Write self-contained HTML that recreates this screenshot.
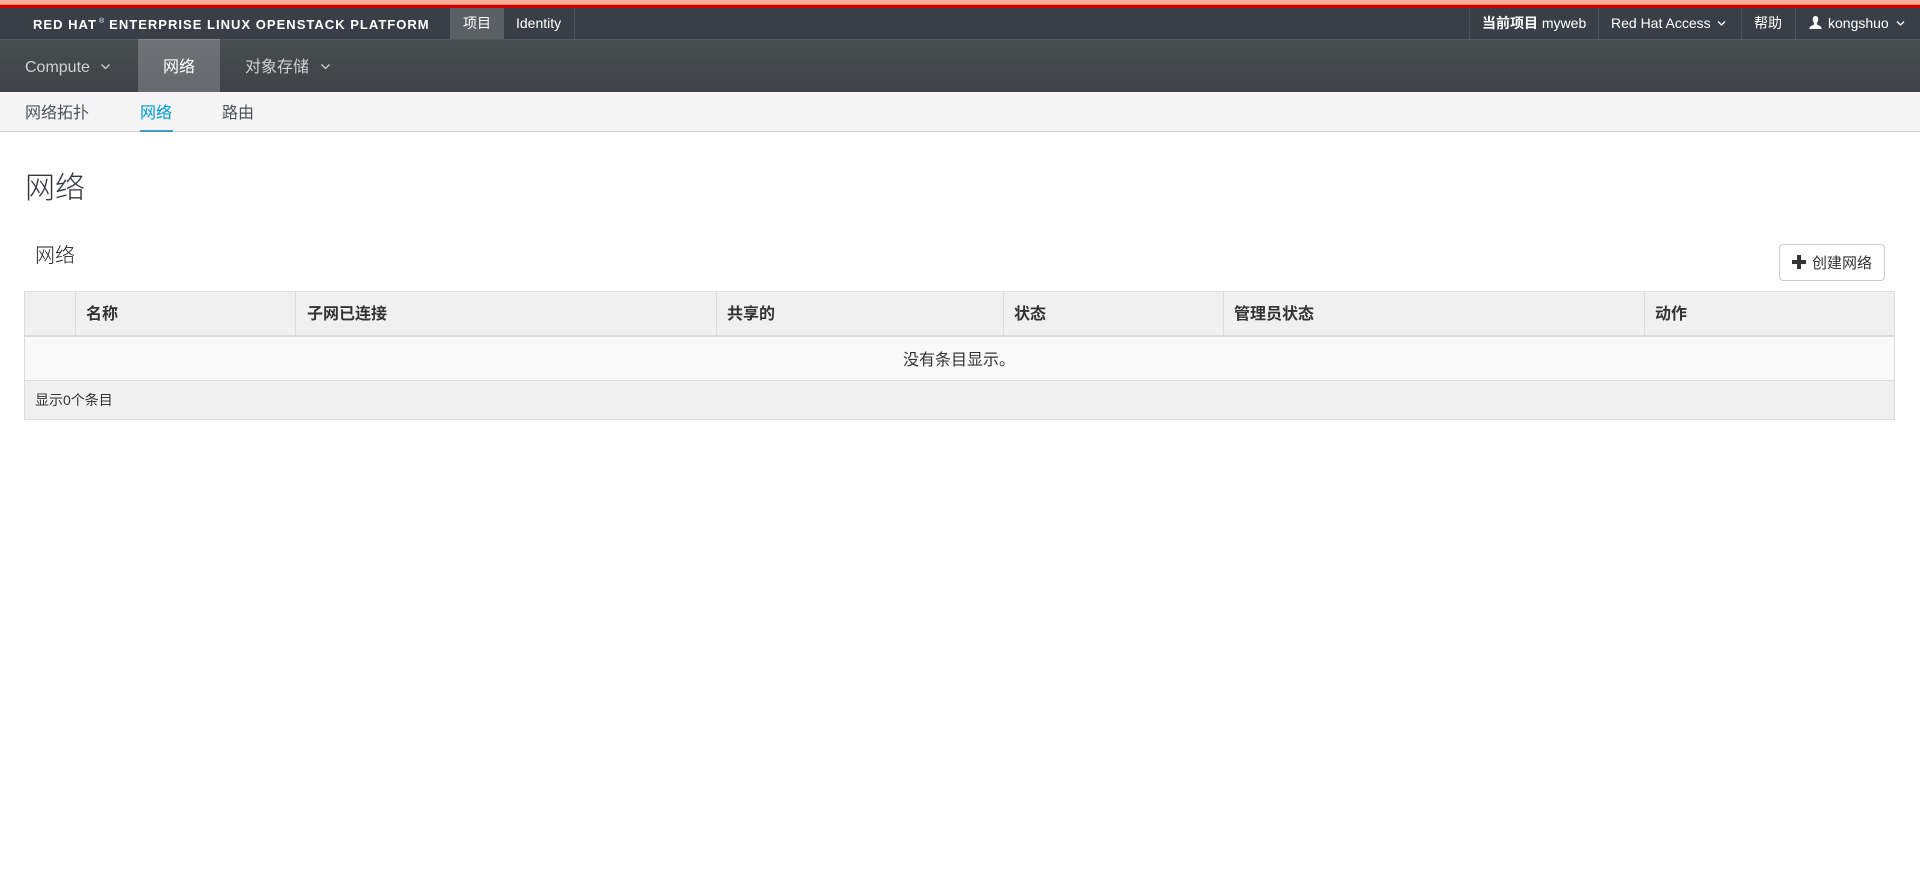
<!DOCTYPE html>
<html lang="zh">
<head>
<meta charset="utf-8">
<title>网络</title>
<style>
html,body{margin:0;padding:0;width:1920px;height:888px;overflow:hidden;background:#fff;}
body{font-family:"Liberation Sans","WenQuanYi Zen Hei","Noto Sans CJK SC",sans-serif;color:#333;font-size:14px;position:relative;}
.a{position:absolute;white-space:nowrap;}
.sep{position:absolute;top:8px;height:31px;width:1px;background:#4e5359;}
.tx{line-height:31px;top:8px;color:#fff;font-size:14px;}
.th{position:absolute;top:292px;height:45px;width:1px;background:#ddd;}
.hd{top:293px;line-height:43px;font-weight:bold;font-size:16px;color:#333;}
</style>
</head>
<body>
<!-- top strips -->
<div class="a" style="left:0;top:0;width:1920px;height:4px;background:#ffae96;"></div>
<div class="a" style="left:0;top:4px;width:1920px;height:1px;background:#f0775f;"></div>
<div class="a" style="left:0;top:5px;width:1920px;height:3px;background:#cc0000;"></div>
<!-- top bar -->
<div class="a" style="left:0;top:8px;width:1920px;height:31px;background:#3a3f47;"></div>
<div class="a" style="left:33px;top:6px;line-height:31px;color:#fff;font-size:13px;font-weight:bold;letter-spacing:1.02px;">RED HAT<span style="font-size:7px;vertical-align:6px;font-weight:normal;margin:0 4px 0 2px;">®</span>ENTERPRISE LINUX OPENSTACK PLATFORM</div>
<div class="a" style="left:450px;top:8px;width:54px;height:31px;background:#5b6066;"></div>
<div class="a tx" style="left:450px;width:54px;text-align:center;">项目</div>
<div class="a tx" style="left:516px;">Identity</div>
<div class="sep" style="left:574px;"></div>
<div class="sep" style="left:1469px;"></div>
<div class="a tx" style="left:1482px;"><b>当前项目</b> myweb</div>
<div class="sep" style="left:1598px;"></div>
<div class="a tx" style="left:1611px;">Red Hat Access</div>
<svg class="a" style="left:1717px;top:20px;" width="9" height="7" viewBox="0 0 9 7"><path d="M1 1.5 4.5 5 8 1.5" fill="none" stroke="#fff" stroke-width="1.3"/></svg>
<div class="sep" style="left:1741px;"></div>
<div class="a tx" style="left:1754px;">帮助</div>
<div class="sep" style="left:1795px;"></div>
<svg class="a" style="left:1809px;top:16px;" width="13" height="14" viewBox="0 0 13 14"><path d="M6.5 0C4.6 0 3.6 1.5 3.7 3.4 3.8 5 4.4 6.3 5.2 7.2L5 8.6C3 9.4.6 10 .3 13H12.7C12.4 10 10 9.4 8 8.6L7.8 7.2C8.6 6.3 9.2 5 9.3 3.4 9.4 1.5 8.4 0 6.5 0Z" fill="#fff"/></svg>
<div class="a tx" style="left:1828px;">kongshuo</div>
<svg class="a" style="left:1896px;top:20px;" width="9" height="7" viewBox="0 0 9 7"><path d="M1 1.5 4.5 5 8 1.5" fill="none" stroke="#fff" stroke-width="1.3"/></svg>
<!-- main nav -->
<div class="a" style="left:0;top:39px;width:1920px;height:53px;background:linear-gradient(#484d50,#3f4347);"></div>
<div class="a" style="left:0;top:39px;width:1920px;height:1px;background:#54585c;"></div>
<div class="a" style="left:138px;top:39px;width:82px;height:53px;background:linear-gradient(#6f7276,#66696d);"></div>
<div class="a" style="left:138px;top:39px;width:82px;height:1px;background:#84878a;"></div>
<div class="a" style="left:25px;top:41px;line-height:53px;color:#d1d1d1;font-size:16px;">Compute</div>
<svg class="a" style="left:100px;top:63px;" width="11" height="8" viewBox="0 0 11 8"><path d="M1.5 1.5 5.5 5.5 9.5 1.5" fill="none" stroke="#d1d1d1" stroke-width="1.3"/></svg>
<div class="a" style="left:138px;top:41px;width:82px;text-align:center;line-height:53px;color:#fff;font-size:16px;">网络</div>
<div class="a" style="left:245px;top:41px;line-height:53px;color:#d1d1d1;font-size:16px;">对象存储</div>
<svg class="a" style="left:320px;top:63px;" width="11" height="8" viewBox="0 0 11 8"><path d="M1.5 1.5 5.5 5.5 9.5 1.5" fill="none" stroke="#d1d1d1" stroke-width="1.3"/></svg>
<!-- sub nav -->
<div class="a" style="left:0;top:92px;width:1920px;height:39px;background:#f5f5f5;"></div>
<div class="a" style="left:0;top:131px;width:1920px;height:1px;background:#cfcfcf;"></div>
<div class="a" style="left:25px;top:94px;line-height:39px;font-size:16px;color:#4d5258;">网络拓扑</div>
<div class="a" style="left:140px;top:94px;line-height:39px;font-size:16px;color:#0099d3;">网络</div>
<div class="a" style="left:140px;top:130px;width:33px;height:2px;background:#3f9bcc;"></div>
<div class="a" style="left:222px;top:94px;line-height:39px;font-size:16px;color:#4d5258;">路由</div>
<!-- headings -->
<div class="a" style="left:25px;top:166px;line-height:46px;font-size:30px;color:#33373d;font-weight:300;font-family:'Liberation Sans','Noto Sans CJK SC',sans-serif;">网络</div>
<div class="a" style="left:35px;top:241px;line-height:30px;font-size:20px;color:#222;font-family:'Liberation Sans','Noto Sans CJK SC',sans-serif;font-weight:300;">网络</div>
<!-- button -->
<div class="a" style="left:1779px;top:244px;width:104px;height:35px;border:1px solid #ccc;border-radius:4px;background:#fff;"></div>
<svg class="a" style="left:1792px;top:255px;" width="14" height="14" viewBox="0 0 14 14"><path d="M5 0H9V5H14V9H9V14H5V9H0V5H5Z" fill="#333"/></svg>
<div class="a" style="left:1812px;top:245px;line-height:37px;font-size:15px;color:#333;">创建网络</div>
<!-- table -->
<div class="a" style="left:24px;top:291px;width:1869px;height:127px;border:1px solid #ddd;background:#f9f9f9;"></div>
<div class="a" style="left:25px;top:292px;width:1869px;height:43px;background:#f0f0f0;"></div>
<div class="a" style="left:25px;top:335px;width:1869px;height:2px;background:#ddd;"></div>
<div class="th" style="left:75px;"></div>
<div class="th" style="left:295px;"></div>
<div class="th" style="left:716px;"></div>
<div class="th" style="left:1003px;"></div>
<div class="th" style="left:1223px;"></div>
<div class="th" style="left:1644px;"></div>
<div class="a hd" style="left:86px;">名称</div>
<div class="a hd" style="left:307px;">子网已连接</div>
<div class="a hd" style="left:727px;">共享的</div>
<div class="a hd" style="left:1014px;">状态</div>
<div class="a hd" style="left:1234px;">管理员状态</div>
<div class="a hd" style="left:1655px;">动作</div>
<div class="a" style="left:25px;top:339px;width:1868px;line-height:43px;text-align:center;font-size:16px;color:#333;">没有条目显示。</div>
<div class="a" style="left:25px;top:380px;width:1869px;height:1px;background:#ddd;"></div>
<div class="a" style="left:25px;top:381px;width:1869px;height:38px;background:#f0f0f0;"></div>
<div class="a" style="left:35px;top:381px;line-height:38px;font-size:14px;color:#333;">显示0个条目</div>
<div class="a" style="left:24px;top:419px;width:1871px;height:1px;background:#ddd;"></div>
<div class="a" style="left:1894px;top:291px;width:1px;height:129px;background:#ddd;"></div>
</body>
</html>
